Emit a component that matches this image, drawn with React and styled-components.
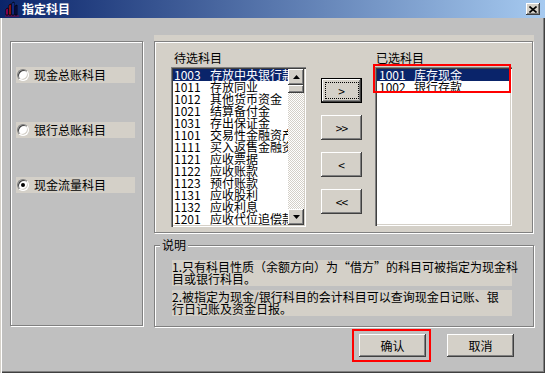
import React from 'react';
import styled, { createGlobalStyle, css } from 'styled-components';

const GlobalStyle = createGlobalStyle`
  html, body {
    margin: 0;
    padding: 0;
  }
  body {
    font-family: "Noto Sans CJK SC", "Liberation Sans", sans-serif;
    font-size: 12px;
    color: #000;
  }
`;

const candidates = [
  ['1003', '存放中央银行款项'],
  ['1011', '存放同业'],
  ['1012', '其他货币资金'],
  ['1021', '结算备付金'],
  ['1031', '存出保证金'],
  ['1101', '交易性金融资产'],
  ['1111', '买入返售金融资产'],
  ['1121', '应收票据'],
  ['1122', '应收账款'],
  ['1123', '预付账款'],
  ['1131', '应收股利'],
  ['1132', '应收利息'],
  ['1201', '应收代位追偿款'],
];

const chosen = [
  ['1001', '库存现金'],
  ['1002', '银行存款'],
];

const radios = [
  { label: '现金总账科目', checked: false },
  { label: '银行总账科目', checked: false },
  { label: '现金流量科目', checked: true },
];

const raised = css`
  background: #d4d0c8;
  box-shadow: inset -1px -1px #404040, inset 1px 1px #fff, inset -2px -2px #808080, inset 2px 2px #d4d0c8;
`;

const etched = css`
  border: 1px solid #808080;
  box-shadow: inset 1px 1px #fff, 1px 1px #fff;
`;

const Window = styled.div`
  width: 545px;
  height: 373px;
  box-sizing: border-box;
  background: #c0c0c0;
  box-shadow: inset 1px 1px #d4d0c8, inset 2px 2px #fff, inset -1px -1px #404040, inset -2px -2px #808080;
  display: flex;
  flex-direction: column;
  overflow: hidden;
`;

const TitleBar = styled.div`
  flex: none;
  height: 18px;
  display: flex;
  align-items: center;
  padding: 0 5px 0 4px;
  background: linear-gradient(to right, #0a246a, #a6caf0);
  color: #fff;
`;

const TitleText = styled.span`
  margin-left: 2px;
  font-weight: bold;
  font-size: 12px;
  line-height: 14px;
`;

const CloseButton = styled.div`
  ${raised};
  margin-left: auto;
  width: 14px;
  height: 12px;
  display: flex;
  align-items: center;
  justify-content: center;
`;

const Body = styled.div`
  flex: 1;
  display: flex;
  flex-direction: column;
  padding: 17px 11px 0 10px;
`;

const Main = styled.div`
  display: flex;
  gap: 11px;
  height: 292px;
`;

const LeftGroup = styled.div`
  ${etched};
  box-sizing: border-box;
  margin-top: 6px;
  width: 133px;
  height: 285px;
  padding: 25px 0 0 5px;
  display: flex;
  flex-direction: column;
  gap: 39px;
`;

const RadioRow = styled.div`
  width: 119px;
  height: 16px;
  display: flex;
  align-items: center;
  background: #d4d0c8;
`;

const RadioCircle = styled.span`
  box-sizing: border-box;
  margin-left: 1px;
  width: 12px;
  height: 12px;
  border-radius: 50%;
  background: #fff;
  border: 1px solid;
  border-color: #808080 #fff #fff #808080;
  box-shadow: inset 1px 1px #404040, inset -1px -1px #d4d0c8;
  display: flex;
  align-items: center;
  justify-content: center;

  &::after {
    content: '';
    display: ${(p) => (p.$checked ? 'block' : 'none')};
    width: 4px;
    height: 4px;
    border-radius: 50%;
    background: #000;
  }
`;

const RadioLabel = styled.span`
  margin-left: 5px;
  line-height: 16px;
`;

const RightColumn = styled.div`
  width: 380px;
  display: flex;
  flex-direction: column;
  gap: 11px;
`;

const PickPanel = styled.div`
  box-sizing: border-box;
  height: 199px;
  padding-top: 6px;
  background: #d4d0c8;
  display: flex;
`;

const PickFrame = styled.div`
  ${etched};
  flex: 1;
  margin: 0 1px 1px 0;
  padding: 8px 0 0 16px;
  display: flex;
  align-items: flex-start;
`;

const ListColumn = styled.div`
  display: flex;
  flex-direction: column;
  margin-left: ${(p) => p.$offset || 0}px;
`;

const ListTitle = styled.div`
  height: 17px;
  line-height: 15px;
  padding-left: ${(p) => p.$indent}px;
`;

const ListBox = styled.div`
  position: relative;
  box-sizing: border-box;
  width: ${(p) => p.$w}px;
  height: ${(p) => p.$h}px;
  padding: 2px;
  background: #fff;
  box-shadow: inset 1px 1px #808080, inset 2px 2px #404040, inset -1px -1px #fff, inset -2px -2px #d4d0c8;
  display: flex;
`;

const Rows = styled.div`
  flex: 1;
  min-width: 0;
  overflow: hidden;
`;

const Row = styled.div`
  height: 12px;
  line-height: 12px;
  display: flex;
  white-space: nowrap;
  padding-left: ${(p) => p.$pad}px;
  background: ${(p) => (p.$selected ? '#0a246a' : 'transparent')};
  color: ${(p) => (p.$selected ? '#fff' : '#000')};
`;

const Code = styled.span`
  flex: none;
  width: ${(p) => p.$w}px;
`;

const ScrollBar = styled.div`
  flex: none;
  width: 16px;
  display: flex;
  flex-direction: column;
  background-color: #fff;
  background-image: repeating-conic-gradient(#d4d0c8 0% 25%, #fff 0% 50%);
  background-size: 2px 2px;
`;

const ScrollButton = styled.div`
  ${raised};
  flex: none;
  height: 16px;
  display: flex;
  align-items: center;
  justify-content: center;
  margin-top: ${(p) => (p.$bottom ? 'auto' : '0')};
`;

const Thumb = styled.div`
  ${raised};
  flex: none;
  height: 8px;
`;

const MoveColumn = styled.div`
  margin-left: 15px;
  padding-top: 28px;
  display: flex;
  flex-direction: column;
  gap: 12px;
`;

const MoveButton = styled.button`
  ${raised};
  position: relative;
  width: 41px;
  height: 25px;
  border: none;
  padding: 0;
  font: inherit;
  font-size: 12px;
  color: #000;
  letter-spacing: ${(p) => (p.$double ? '-1px' : '0')};

  ${(p) =>
    p.$default &&
    css`
      box-shadow: inset 0 0 0 1px #000, inset -2px -2px #404040, inset 2px 2px #fff, inset -3px -3px #808080;

      &::after {
        content: '';
        position: absolute;
        inset: 4px 3px 4px 4px;
        border: 1px dotted #000;
      }
    `}
`;

const NoteGroup = styled.div`
  ${etched};
  position: relative;
  box-sizing: border-box;
  height: 82px;
  padding: 14px 0 0 17px;
  display: flex;
  flex-direction: column;
  gap: 4px;
`;

const Legend = styled.span`
  position: absolute;
  top: -7px;
  left: 5px;
  padding: 0 2px;
  background: #c0c0c0;
  line-height: 12px;
`;

const NoteText = styled.div`
  width: 340px;
  padding: 1px 0;
  background: #d4d0c8;
  line-height: 12px;
  white-space: nowrap;
`;

const ButtonRow = styled.div`
  margin-top: 7px;
  padding-right: 20px;
  display: flex;
  justify-content: flex-end;
  gap: 21px;
`;

const DialogButton = styled.button`
  ${raised};
  position: relative;
  width: 67px;
  height: 23px;
  border: none;
  padding: 0;
  font: inherit;
  font-size: 12px;
  color: #000;
`;

const Mark = styled.span`
  position: absolute;
  box-sizing: border-box;
  top: ${(p) => p.$top}px;
  left: ${(p) => p.$left}px;
  width: ${(p) => p.$w}px;
  height: ${(p) => p.$h}px;
  border: 2px solid #f00;
  pointer-events: none;
`;

const AppIcon = () => (
  <svg width="16" height="16" viewBox="0 0 16 16">
    <path d="M1 15 L15 15" stroke="#800040" strokeWidth="1" />
    <path d="M2 14 L2 8 L4 7 L4 14 Z" fill="#e0007c" stroke="#000" strokeWidth="0.8" />
    <path d="M5 14 L5 4 L7 3 L7 14 Z" fill="#e02020" stroke="#000" strokeWidth="0.8" />
    <path d="M8 14 L8 2 L10 1 L10 14 Z" fill="#2040d0" stroke="#000" strokeWidth="0.8" />
    <path d="M11 14 L11 5 L13 4 L13 14 Z" fill="#101060" stroke="#000" strokeWidth="0.8" />
  </svg>
);

const CloseGlyph = () => (
  <svg width="8" height="7" viewBox="0 0 8 7">
    <path d="M0.5 0.5 L7.5 6.5 M7.5 0.5 L0.5 6.5" stroke="#000" strokeWidth="1.6" />
  </svg>
);

const Arrow = ({ down }) => (
  <svg width="7" height="4" viewBox="0 0 7 4">
    <polygon points={down ? '0,0 7,0 3.5,4' : '3.5,0 7,4 0,4'} fill="#000" />
  </svg>
);

const App = () => (
  <>
    <GlobalStyle />
    <Window>
      <TitleBar>
        <AppIcon />
        <TitleText>指定科目</TitleText>
        <CloseButton>
          <CloseGlyph />
        </CloseButton>
      </TitleBar>

      <Body>
        <Main>
          <LeftGroup>
            {radios.map((r) => (
              <RadioRow key={r.label}>
                <RadioCircle $checked={r.checked} />
                <RadioLabel>{r.label}</RadioLabel>
              </RadioRow>
            ))}
          </LeftGroup>

          <RightColumn>
            <PickPanel>
              <PickFrame>
                <ListColumn>
                  <ListTitle $indent={3}>待选科目</ListTitle>
                  <ListBox $w={135} $h={160}>
                    <Rows>
                      {candidates.map(([code, name], i) => (
                        <Row key={code} $pad={1} $selected={i === 0}>
                          <Code $w={36}>{code}</Code>
                          {name}
                        </Row>
                      ))}
                    </Rows>
                    <ScrollBar>
                      <ScrollButton>
                        <Arrow />
                      </ScrollButton>
                      <Thumb />
                      <ScrollButton $bottom>
                        <Arrow down />
                      </ScrollButton>
                    </ScrollBar>
                  </ListBox>
                </ListColumn>

                <MoveColumn>
                  <MoveButton $default>&gt;</MoveButton>
                  <MoveButton $double>&gt;&gt;</MoveButton>
                  <MoveButton>&lt;</MoveButton>
                  <MoveButton $double>&lt;&lt;</MoveButton>
                </MoveColumn>

                <ListColumn $offset={13}>
                  <ListTitle $indent={1}>已选科目</ListTitle>
                  <ListBox $w={137} $h={159}>
                    <Rows>
                      {chosen.map(([code, name], i) => (
                        <Row key={code} $pad={2} $selected={i === 0}>
                          <Code $w={35}>{code}</Code>
                          {name}
                        </Row>
                      ))}
                    </Rows>
                    <Mark $top={-3} $left={-2} $w={138} $h={29} />
                  </ListBox>
                </ListColumn>
              </PickFrame>
            </PickPanel>

            <NoteGroup>
              <Legend>说明</Legend>
              <NoteText>
                1.只有科目性质（余额方向）为“借方”的科目可被指定为现金科
                <br />
                目或银行科目。
              </NoteText>
              <NoteText>
                2.被指定为现金/银行科目的会计科目可以查询现金日记账、银
                <br />
                行日记账及资金日报。
              </NoteText>
            </NoteGroup>
          </RightColumn>
        </Main>

        <ButtonRow>
          <DialogButton>
            确认
            <Mark $top={-5} $left={-7} $w={79} $h={33} />
          </DialogButton>
          <DialogButton>取消</DialogButton>
        </ButtonRow>
      </Body>
    </Window>
  </>
);

export default App;
